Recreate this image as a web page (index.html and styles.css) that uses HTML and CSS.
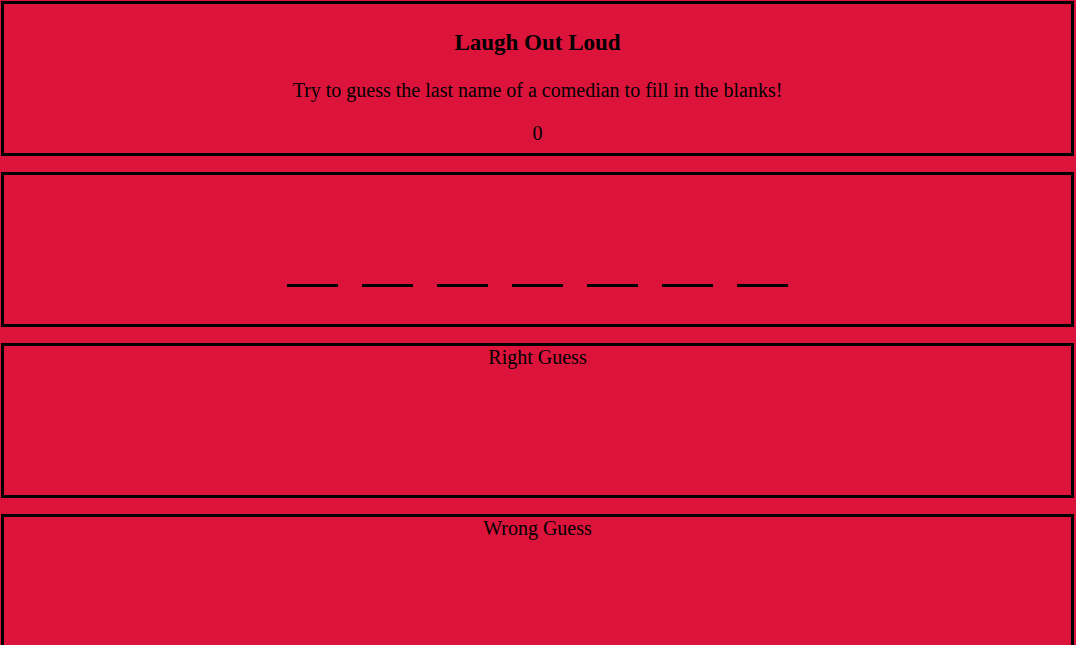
FILE: index.html
```html
<!DOCTYPE html>
<html>
<head>
<meta charset="utf-8">
<title>Laugh Out Loud</title>
<link rel="stylesheet" href="styles.css">
</head>
<body>
<main class="page">
  <section class="box header">
    <h1 class="title">Laugh Out Loud</h1>
    <p class="lead">Try to guess the last name of a comedian to fill in the blanks!</p>
    <p class="score">0</p>
  </section>
  <section class="box blanks">
    <div class="dashes">
      <span class="dash"></span><span class="dash"></span><span class="dash"></span><span class="dash"></span><span class="dash"></span><span class="dash"></span><span class="dash"></span>
    </div>
  </section>
  <section class="box guesses">
    <div class="label">Right Guess</div>
  </section>
  <section class="box guesses">
    <div class="label">Wrong Guess</div>
  </section>
</main>
</body>
</html>
```
FILE: styles.css
```css
html, body {
  margin: 0;
  padding: 0;
  background: #dc143c;
  height: 645px;
  overflow: hidden;
}
body {
  font-family: "Liberation Serif", "Times New Roman", serif;
  color: #000;
}
.page {
  display: flex;
  flex-direction: column;
  gap: 16px;
  padding: 1px 2px 0 1px;
}
.box {
  box-sizing: border-box;
  height: 155px;
  border: 3px solid #000;
  flex: none;
  text-align: center;
}
.header {
  padding-top: 26px;
}
.title {
  margin: 0;
  font-size: 23px;
  font-weight: bold;
  line-height: 26px;
}
.lead {
  margin: 23px 0 0;
  font-size: 20px;
  line-height: 22px;
}
.score {
  margin: 21px 0 0;
  font-size: 20px;
  line-height: 22px;
}
.blanks {
  display: flex;
  align-items: flex-start;
  justify-content: center;
  padding-top: 109px;
}
.dashes {
  display: flex;
  gap: 24px;
}
.dash {
  display: block;
  width: 51px;
  height: 3px;
  background: #000;
}
.guesses {
  padding-top: 0;
}
.label {
  font-size: 20px;
  line-height: 22px;
}
```
